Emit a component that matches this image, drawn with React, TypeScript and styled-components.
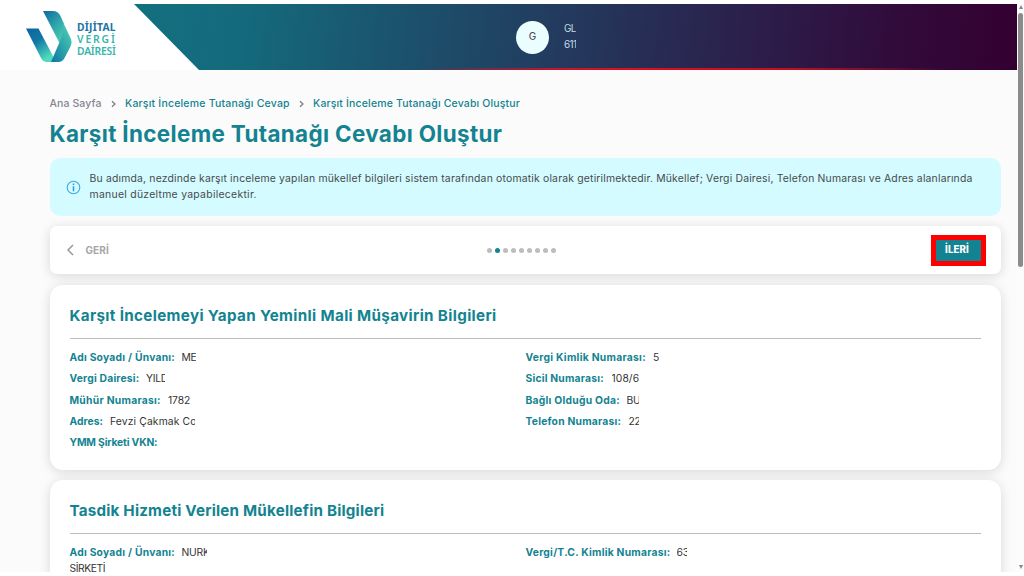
import React from "react";
import styled, { createGlobalStyle, css } from "styled-components";

const teal = "#138391";

const GlobalStyle = createGlobalStyle`
  * { box-sizing: border-box; }
  html, body { margin: 0; padding: 0; overflow: hidden; background: #fff; }
  body { font-family: Inter, "Noto Sans", sans-serif; color: #333; }
`;

const Page = styled.div`
  width: 1024px;
  height: 576px;
  padding: 4px 0;
  display: flex;
  background: #fff;
  overflow: hidden;
`;

const Content = styled.div`
  width: 1017px;
  height: 568px;
  display: flex;
  flex-direction: column;
  background: #fbfbfb;
  overflow: hidden;
`;

const ScrollTrack = styled.div`
  width: 7px;
  display: flex;
  flex-direction: column;
  align-items: center;
  background: #fcfcfc;
`;

const Arrow = styled.div<{ $down?: boolean }>`
  width: 0;
  height: 0;
  border-left: 2.5px solid transparent;
  border-right: 2.5px solid transparent;
  ${(p) =>
    p.$down
      ? css`border-top: 4px solid #858585; margin: auto 0 3px;`
      : css`border-bottom: 4px solid #858585; margin: 1px 0 4px;`}
`;

const Thumb = styled.div`
  width: 5px;
  height: 254px;
  border-radius: 3px;
  background: #8b8b8b;
`;

const Header = styled.header`
  height: 66px;
  flex: none;
  display: grid;
  grid-template-columns: 134px 1fr;
  background: #fff;
`;

const Brand = styled.div`
  display: flex;
  padding: 6px 0 0 26px;
  gap: 5px;
`;

const BrandText = styled.div`
  padding-top: 11px;
  display: flex;
  flex-direction: column;
  font: 600 10.3px/12px "Noto Sans", sans-serif;
  white-space: nowrap;
`;

const BrandLine = styled.span<{ $color: string; $ls: number; $bold?: boolean }>`
  color: ${(p) => p.$color};
  letter-spacing: ${(p) => p.$ls}px;
  font-weight: ${(p) => (p.$bold ? 700 : 600)};
`;

const Band = styled.div`
  display: flex;
  align-items: center;
  padding-left: 382px;
  background:
    linear-gradient(90deg, transparent 32%, #c8142a 48%, #dd0f1c 58%, #c20f20 74%, transparent 92%) bottom / 100% 2px no-repeat,
    linear-gradient(97deg, #12707f 0%, #146a7c 12%, #1d4c69 35%, #263057 56%, #2c1c49 72%, #310b3a 86%, #340031 100%);
  clip-path: polygon(0 0, 100% 0, 100% 100%, 65px 100%);
`;

const Avatar = styled.div`
  width: 33px;
  height: 33px;
  border-radius: 50%;
  background: #eafdff;
  color: #554f5c;
  display: flex;
  align-items: center;
  justify-content: center;
  padding-bottom: 2px;
  font-size: 10px;
  font-weight: 500;
`;

const UserInfo = styled.div`
  width: 12px;
  margin: -1px 0 0 15px;
  overflow: hidden;
  white-space: nowrap;
  font-size: 10px;
  line-height: 15.5px;
  letter-spacing: -0.6px;
  color: #c3d9e2;
`;

const Main = styled.main`
  padding: 26px 16px 0 49.5px;
  display: flex;
  flex-direction: column;
`;

const Breadcrumb = styled.nav`
  height: 15px;
  display: flex;
  align-items: center;
  font-size: 10.5px;
  font-weight: 500;
  white-space: nowrap;
`;

const Crumb = styled.span<{ $w: number; $ls: number; $muted?: boolean }>`
  width: ${(p) => p.$w}px;
  letter-spacing: ${(p) => p.$ls}px;
  color: ${(p) => (p.$muted ? "#858590" : teal)};
`;

const CrumbArrow = styled.svg`
  width: 23px;
  height: 8px;
`;

const Title = styled.h1`
  margin: 7px 0 9px;
  height: 31px;
  font-size: 22.4px;
  line-height: 31px;
  font-weight: 700;
  color: ${teal};
  white-space: nowrap;
  letter-spacing: 0.36px;
`;

const Notice = styled.section`
  height: 58px;
  padding: 13px 0 0 16px;
  display: flex;
  gap: 9px;
  border-radius: 10px;
  background: #d4fbff;
`;

const NoticeText = styled.p`
  margin: 0;
  font-size: 10.4px;
  line-height: 16px;
  color: #444b4d;
  white-space: nowrap;
`;

const NoticeLine = styled.span<{ $ls: number }>`
  display: block;
  letter-spacing: ${(p) => p.$ls}px;
`;

const InfoIcon = styled.svg`
  width: 15px;
  height: 15px;
  margin-top: 9px;
`;

const shadow = "0 2px 12px rgba(0, 0, 0, 0.14)";

const StepBar = styled.section`
  height: 48px;
  margin-top: 10px;
  padding: 0 15px 0 16px;
  display: grid;
  grid-template-columns: 421px 70px 1fr;
  align-items: center;
  border-radius: 7px;
  background: #fff;
  box-shadow: ${shadow};
`;

const Back = styled.div`
  display: flex;
  align-items: center;
  gap: 11px;
  font-size: 10px;
  font-weight: 700;
  letter-spacing: 0.1px;
  color: #a6a6a6;
`;

const Dots = styled.div`
  display: flex;
  gap: 3px;
`;

const Dot = styled.i<{ $on?: boolean }>`
  width: 5px;
  height: 5px;
  border-radius: 50%;
  background: ${(p) => (p.$on ? teal : "#bdbdbd")};
`;

const Next = styled.button`
  width: 55px;
  height: 31px;
  padding: 0 3px 2px 0;
  justify-self: end;
  border: 5px solid #fe0000;
  background: ${teal};
  color: #fff;
  font: 800 9.7px Inter, sans-serif;
  letter-spacing: 0.1px;
`;

const Card = styled.section<{ $h: number; $top: number }>`
  height: ${(p) => p.$h}px;
  margin-top: ${(p) => p.$top}px;
  padding: 19px 20px 0;
  border-radius: 13px;
  background: #fff;
  box-shadow: ${shadow};
`;

const CardTitle = styled.h2<{ $ls: number }>`
  margin: 0;
  height: 35px;
  font-size: 15.2px;
  line-height: 24px;
  font-weight: 700;
  color: ${teal};
  letter-spacing: ${(p) => p.$ls}px;
  white-space: nowrap;
  border-bottom: 1px solid #bcbcbc;
`;

const Columns = styled.div`
  display: grid;
  grid-template-columns: 456px 456px;
  padding-top: 8.3px;
`;

const Field = styled.div`
  height: 21.1px;
  display: flex;
  align-items: center;
  padding-bottom: 1px;
  font-size: 10.3px;
  white-space: nowrap;
`;

const Label = styled.span<{ $w: number; $ls: number }>`
  flex: none;
  width: ${(p) => p.$w}px;
  font-weight: 700;
  color: ${teal};
  letter-spacing: ${(p) => p.$ls}px;
`;

const Value = styled.span<{ $w: number; $ls: number }>`
  width: ${(p) => p.$w}px;
  overflow: hidden;
  letter-spacing: ${(p) => p.$ls}px;
`;

const Continuation = styled.div`
  margin-top: -3.5px;
  font-size: 10.3px;
  line-height: 17px;
  letter-spacing: -0.4px;
`;

type Item = { label: string; lw: number; ls: number; value?: string; vw?: number; vs?: number };

const auditorLeft: Item[] = [
  { label: "Adı Soyadı / Ünvanı:", lw: 112, ls: 0.24, value: "ME", vw: 14, vs: -0.3 },
  { label: "Vergi Dairesi:", lw: 76.5, ls: 0.2, value: "YILD", vw: 19, vs: -0.3 },
  { label: "Mühür Numarası:", lw: 98.5, ls: 0.28, value: "1782", vw: 30, vs: -0.1 },
  { label: "Adres:", lw: 40.5, ls: 0.05, value: "Fevzi Çakmak Co", vw: 85, vs: 0.15 },
  { label: "YMM Şirketi VKN:", lw: 100, ls: -0.15 },
];

const auditorRight: Item[] = [
  { label: "Vergi Kimlik Numarası:", lw: 127.5, ls: 0.28, value: "5", vw: 12, vs: 0 },
  { label: "Sicil Numarası:", lw: 86, ls: 0.2, value: "108/6", vw: 27.5, vs: 0.1 },
  { label: "Bağlı Olduğu Oda:", lw: 101, ls: 0.25, value: "BU", vw: 12, vs: -0.2 },
  { label: "Telefon Numarası:", lw: 103, ls: 0.22, value: "22", vw: 10.5, vs: -0.3 },
];

const clientLeft: Item[] = [
  { label: "Adı Soyadı / Ünvanı:", lw: 112, ls: 0.24, value: "NURK", vw: 25, vs: -0.2 },
];

const clientRight: Item[] = [
  { label: "Vergi/T.C. Kimlik Numarası:", lw: 151, ls: 0.24, value: "63", vw: 10.5, vs: -0.2 },
];

const Fields = ({ items }: { items: Item[] }) => (
  <>
    {items.map((it) => (
      <Field key={it.label}>
        <Label $w={it.lw} $ls={it.ls}>{it.label}</Label>
        {it.value && <Value $w={it.vw ?? 0} $ls={it.vs ?? 0}>{it.value}</Value>}
      </Field>
    ))}
  </>
);

const Logo = () => (
  <svg width="46" height="53" viewBox="0 0 46 53">
    <defs>
      <linearGradient id="strap" x1="0" y1="0" x2="0.6" y2="1">
        <stop offset="0" stopColor="#0b64a0" />
        <stop offset="0.45" stopColor="#1277a5" />
        <stop offset="1" stopColor="#4fdcbc" />
      </linearGradient>
      <linearGradient id="fold" x1="0" y1="0" x2="0.7" y2="1">
        <stop offset="0" stopColor="#0d679f" />
        <stop offset="0.6" stopColor="#31a9ab" />
        <stop offset="1" stopColor="#49c9b2" />
      </linearGradient>
      <linearGradient id="tail" x1="0.1" y1="1" x2="0.8" y2="0.2">
        <stop offset="0" stopColor="#127ba5" />
        <stop offset="0.5" stopColor="#2a9fa9" />
        <stop offset="1" stopColor="#45c5b2" />
      </linearGradient>
    </defs>
    <path d="M0 18.500H12.500L27.500 47L27 52h-6q-4 0-6-4Z" fill="url(#strap)" />
    <path d="M17 1h10q5 0 7.500 5L38 14v18l-4 2Z" fill="url(#fold)" />
    <path d="M37 12L44.500 28q2 4 0 8.500l-6 11.500q-2 4-6 4H25l9-21q4-8 3-19Z" fill="url(#tail)" />
  </svg>
);

const Chevron = () => (
  <CrumbArrow viewBox="0 0 23 8">
    <path d="M10 1.200l3 2.800-3 2.800" fill="none" stroke="#777781" strokeWidth="1.200" />
  </CrumbArrow>
);

export default function App() {
  return (
    <Page>
      <GlobalStyle />
      <Content>
        <Header>
          <Brand>
            <Logo />
            <BrandText>
              <BrandLine $color="#2174a5" $ls={0.25} $bold>DİJİTAL</BrandLine>
              <BrandLine $color="#37b5ac" $ls={1.9}>VERGİ</BrandLine>
              <BrandLine $color="#37b5ac" $ls={-0.2}>DAİRESİ</BrandLine>
            </BrandText>
          </Brand>
          <Band>
            <Avatar>G</Avatar>
            <UserInfo>
              <div>GL</div>
              <div>611</div>
            </UserInfo>
          </Band>
        </Header>
        <Main>
          <Breadcrumb>
            <Crumb $w={52.5} $ls={0.1} $muted>Ana Sayfa</Crumb>
            <Chevron />
            <Crumb $w={165} $ls={0.2}>Karşıt İnceleme Tutanağı Cevap</Crumb>
            <Chevron />
            <Crumb $w={208} $ls={0.16}>Karşıt İnceleme Tutanağı Cevabı Oluştur</Crumb>
          </Breadcrumb>
          <Title>Karşıt İnceleme Tutanağı Cevabı Oluştur</Title>
          <Notice>
            <InfoIcon viewBox="0 0 15 15">
              <circle cx="7.500" cy="7.500" r="6.300" fill="none" stroke="#3ba9e0" strokeWidth="1.100" />
              <path d="M7.500 6.300v4.900M7.500 3.600v1.500" stroke="#2b9bd8" strokeWidth="1.500" />
            </InfoIcon>
            <NoticeText>
              <NoticeLine $ls={0.187}>
                Bu adımda, nezdinde karşıt inceleme yapılan mükellef bilgileri sistem tarafından otomatik olarak getirilmektedir. Mükellef; Vergi Dairesi, Telefon Numarası ve Adres alanlarında
              </NoticeLine>
              <NoticeLine $ls={0.29}>manuel düzeltme yapabilecektir.</NoticeLine>
            </NoticeText>
          </Notice>
          <StepBar>
            <Back>
              <svg width="9" height="12" viewBox="0 0 9 12">
                <path d="M7 1L2 6l5 5" fill="none" stroke="#999" strokeWidth="1.500" />
              </svg>
              GERİ
            </Back>
            <Dots>
              {Array.from({ length: 9 }, (_, i) => (
                <Dot key={i} $on={i === 1} />
              ))}
            </Dots>
            <Next>İLERİ</Next>
          </StepBar>
          <Card $h={185} $top={11}>
            <CardTitle $ls={0.35}>Karşıt İncelemeyi Yapan Yeminli Mali Müşavirin Bilgileri</CardTitle>
            <Columns>
              <div><Fields items={auditorLeft} /></div>
              <div><Fields items={auditorRight} /></div>
            </Columns>
          </Card>
          <Card $h={140} $top={10}>
            <CardTitle $ls={0.2}>Tasdik Hizmeti Verilen Mükellefin Bilgileri</CardTitle>
            <Columns>
              <div>
                <Fields items={clientLeft} />
                <Continuation>SİRKETİ</Continuation>
              </div>
              <div><Fields items={clientRight} /></div>
            </Columns>
          </Card>
        </Main>
      </Content>
      <ScrollTrack>
        <Arrow />
        <Thumb />
        <Arrow $down />
      </ScrollTrack>
    </Page>
  );
}
